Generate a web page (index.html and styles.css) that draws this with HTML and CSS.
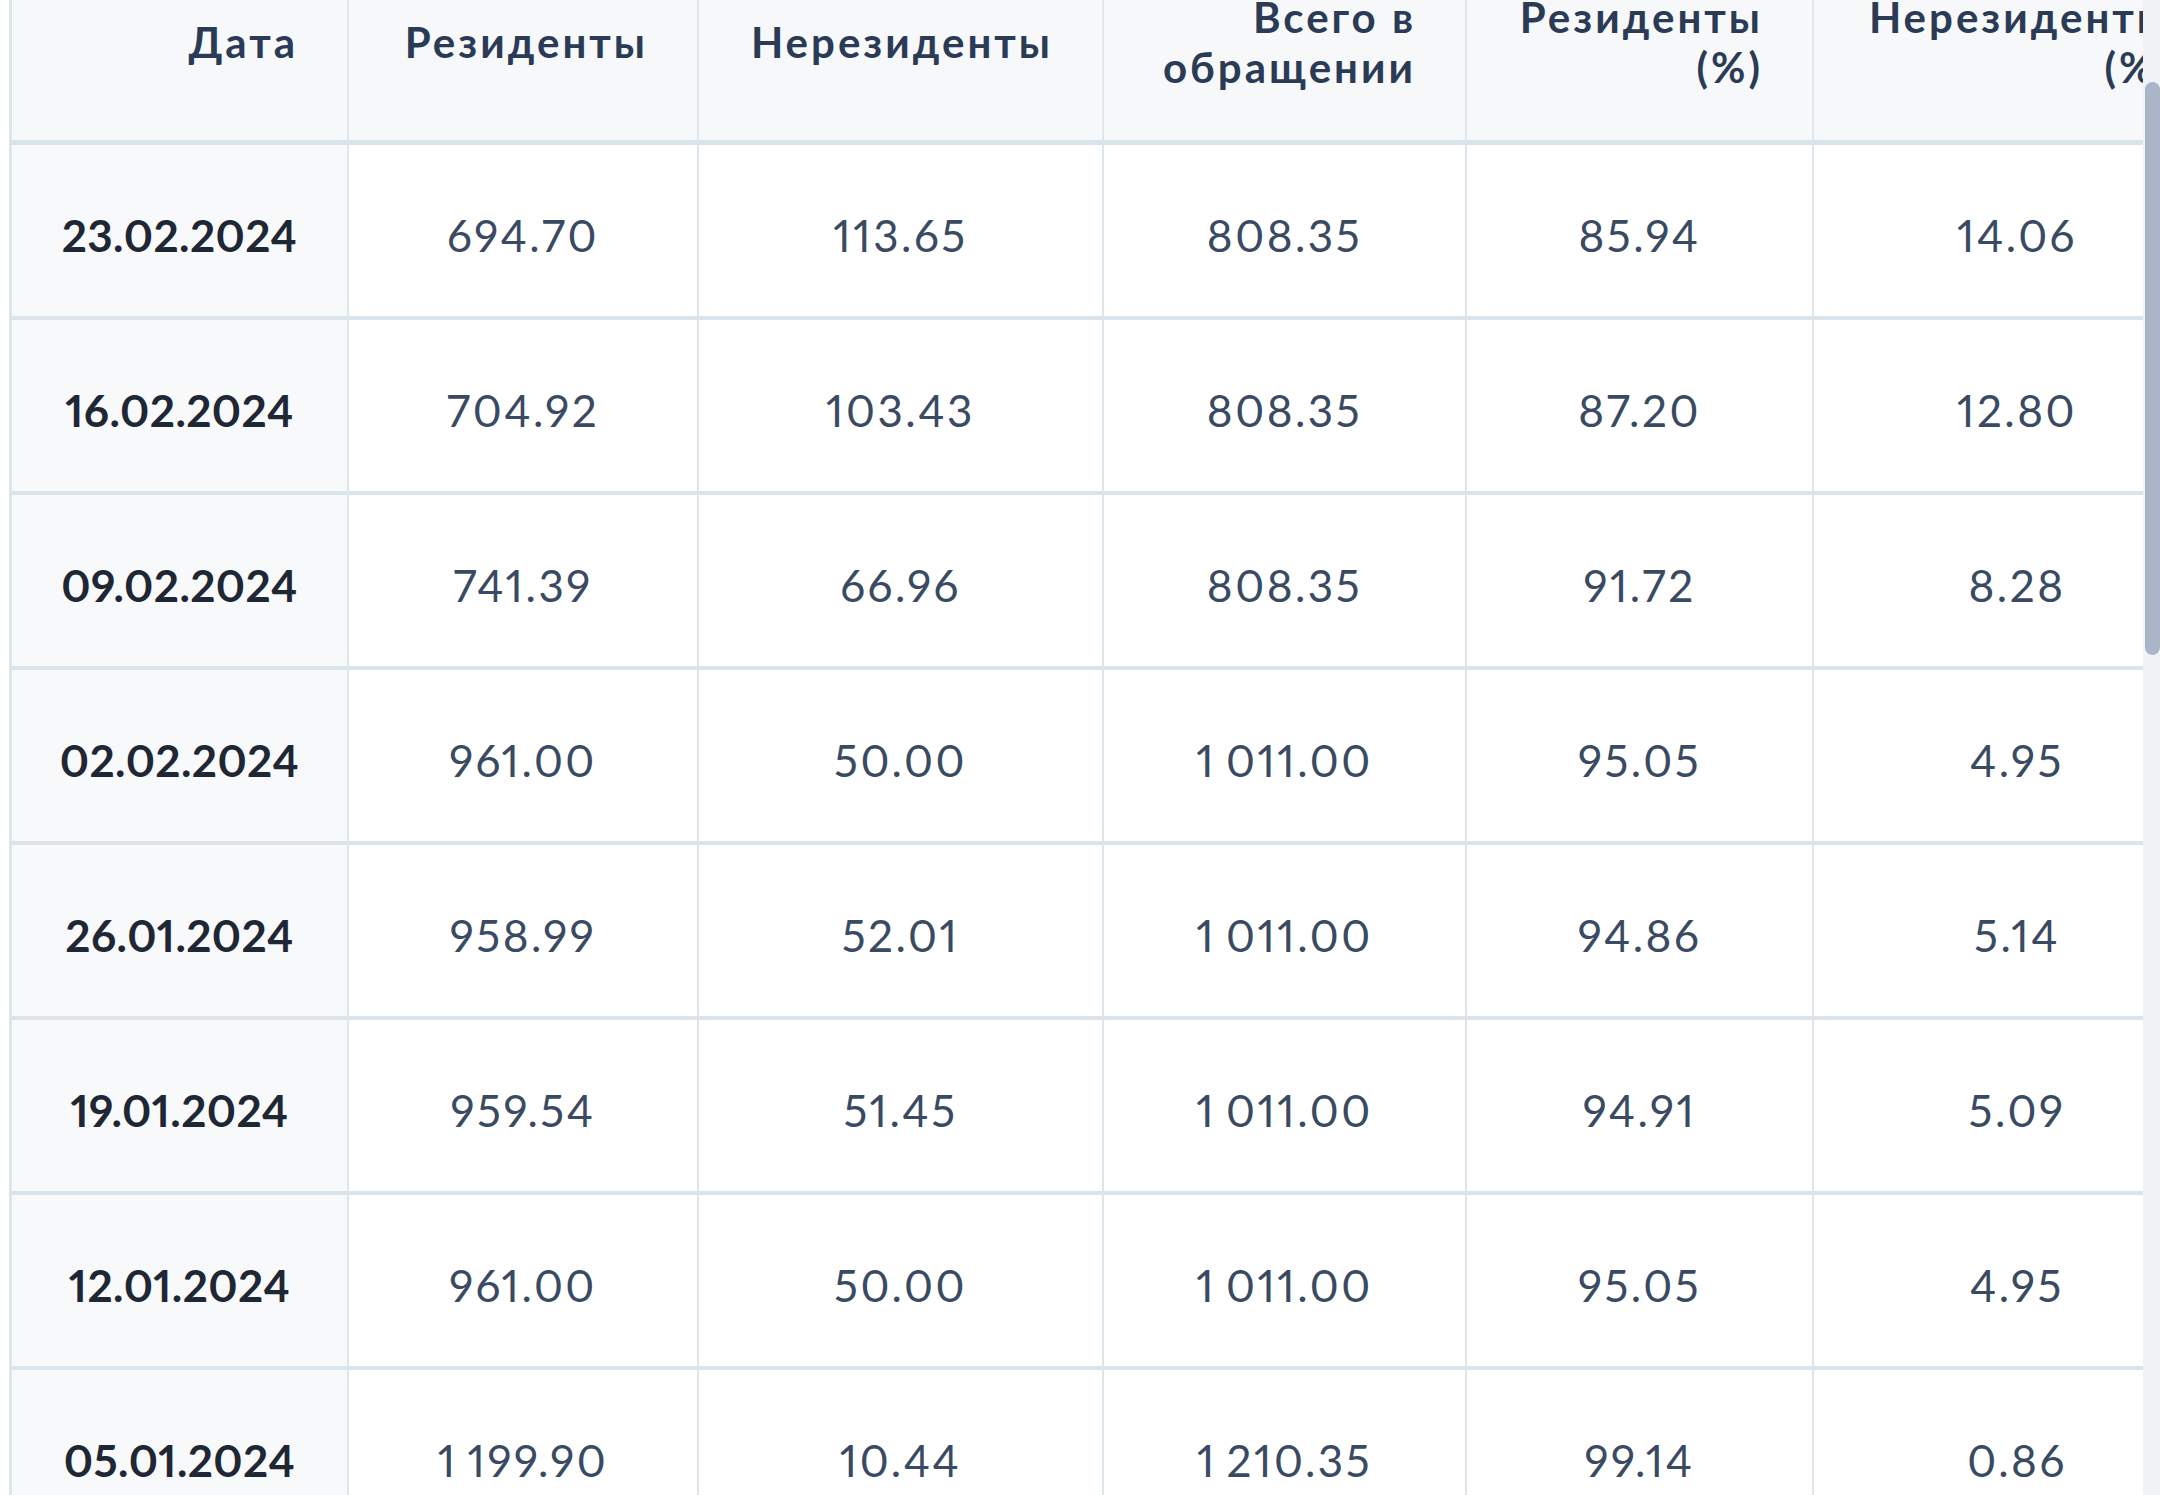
FILE: index.html
```html
<!DOCTYPE html>
<html lang="ru">
<head>
<meta charset="utf-8">
<title>Держатели облигаций</title>
<link rel="stylesheet" href="styles.css">
</head>
<body>
<div class="viewport">
  <table class="grid">
    <colgroup>
      <col class="c-date">
      <col class="c-res">
      <col class="c-nonres">
      <col class="c-total">
      <col class="c-res-pct">
      <col class="c-nonres-pct">
    </colgroup>
    <thead>
      <tr>
        <th class="first">Дата</th>
        <th>Резиденты</th>
        <th>Нерезиденты</th>
        <th>Всего в обращении</th>
        <th>Резиденты (%)</th>
        <th>Нерезиденты (%)</th>
      </tr>
    </thead>
    <tbody>
      <tr><td class="date">23.02.2024</td><td>694.70</td><td>113.65</td><td>808.35</td><td>85.94</td><td>14.06</td></tr>
      <tr><td class="date">16.02.2024</td><td>704.92</td><td>103.43</td><td>808.35</td><td>87.20</td><td>12.80</td></tr>
      <tr><td class="date">09.02.2024</td><td>741.39</td><td>66.96</td><td>808.35</td><td>91.72</td><td>8.28</td></tr>
      <tr><td class="date">02.02.2024</td><td>961.00</td><td>50.00</td><td>1&nbsp;011.00</td><td>95.05</td><td>4.95</td></tr>
      <tr><td class="date">26.01.2024</td><td>958.99</td><td>52.01</td><td>1&nbsp;011.00</td><td>94.86</td><td>5.14</td></tr>
      <tr><td class="date">19.01.2024</td><td>959.54</td><td>51.45</td><td>1&nbsp;011.00</td><td>94.91</td><td>5.09</td></tr>
      <tr><td class="date">12.01.2024</td><td>961.00</td><td>50.00</td><td>1&nbsp;011.00</td><td>95.05</td><td>4.95</td></tr>
      <tr><td class="date">05.01.2024</td><td>1&nbsp;199.90</td><td>10.44</td><td>1&nbsp;210.35</td><td>99.14</td><td>0.86</td></tr>
    </tbody>
  </table>
  <div class="scrollbar"><div class="thumb"></div></div>
</div>
</body>
</html>
```

FILE: styles.css
```css
html, body {
  margin: 0;
  padding: 0;
  background: #ffffff;
  overflow: hidden;
}

.viewport {
  position: relative;
  width: 2160px;
  height: 1495px;
  overflow: hidden;
  background: #ffffff;
}

.grid {
  margin-top: -56px;
  margin-left: 9px;
  width: 2213px;
  table-layout: fixed;
  border-collapse: separate;
  border-spacing: 0;
  font-family: "Lato", "Noto Sans", "DejaVu Sans", sans-serif;
  font-variant-numeric: proportional-nums;
}

.c-date { width: 340px; }
.c-res { width: 350px; }
.c-nonres { width: 405px; }
.c-total { width: 363px; }
.c-res-pct { width: 347px; }
.c-nonres-pct { width: 408px; }

.grid th,
.grid td {
  box-sizing: border-box;
  border-right: 2px solid #dde6eb;
  vertical-align: middle;
}

.grid th {
  height: 201px;
  padding: 0 49px 0 40px;
  text-align: right;
  font-size: 42px;
  line-height: 50px;
  letter-spacing: 3px;
  font-weight: 700;
  color: #2b3b56;
  background: #f6f8fa;
  border-bottom: 5px solid #d9e3ea;
}

.grid th.first,
.grid td.date {
  border-left: 3px solid #dde6eb;
}

.grid td {
  height: 175px;
  padding: 8px 10px 0;
  text-align: center;
  font-size: 44px;
  font-weight: 400;
  letter-spacing: 2.5px;
  word-spacing: -4px;
  color: #3a4a62;
  background: #ffffff;
  border-bottom: 4px solid #dbe4ea;
  white-space: nowrap;
}

.grid td.date {
  font-weight: 700;
  letter-spacing: 0.4px;
  color: #1f2634;
  background: #f7f9fb;
}

.scrollbar {
  position: absolute;
  top: 0;
  right: 0;
  width: 17px;
  height: 1495px;
  background: #f0f2f5;
}

.thumb {
  position: absolute;
  top: 82px;
  left: 2px;
  width: 15px;
  height: 573px;
  border-radius: 8px;
  background: #aab6c8;
}
```
